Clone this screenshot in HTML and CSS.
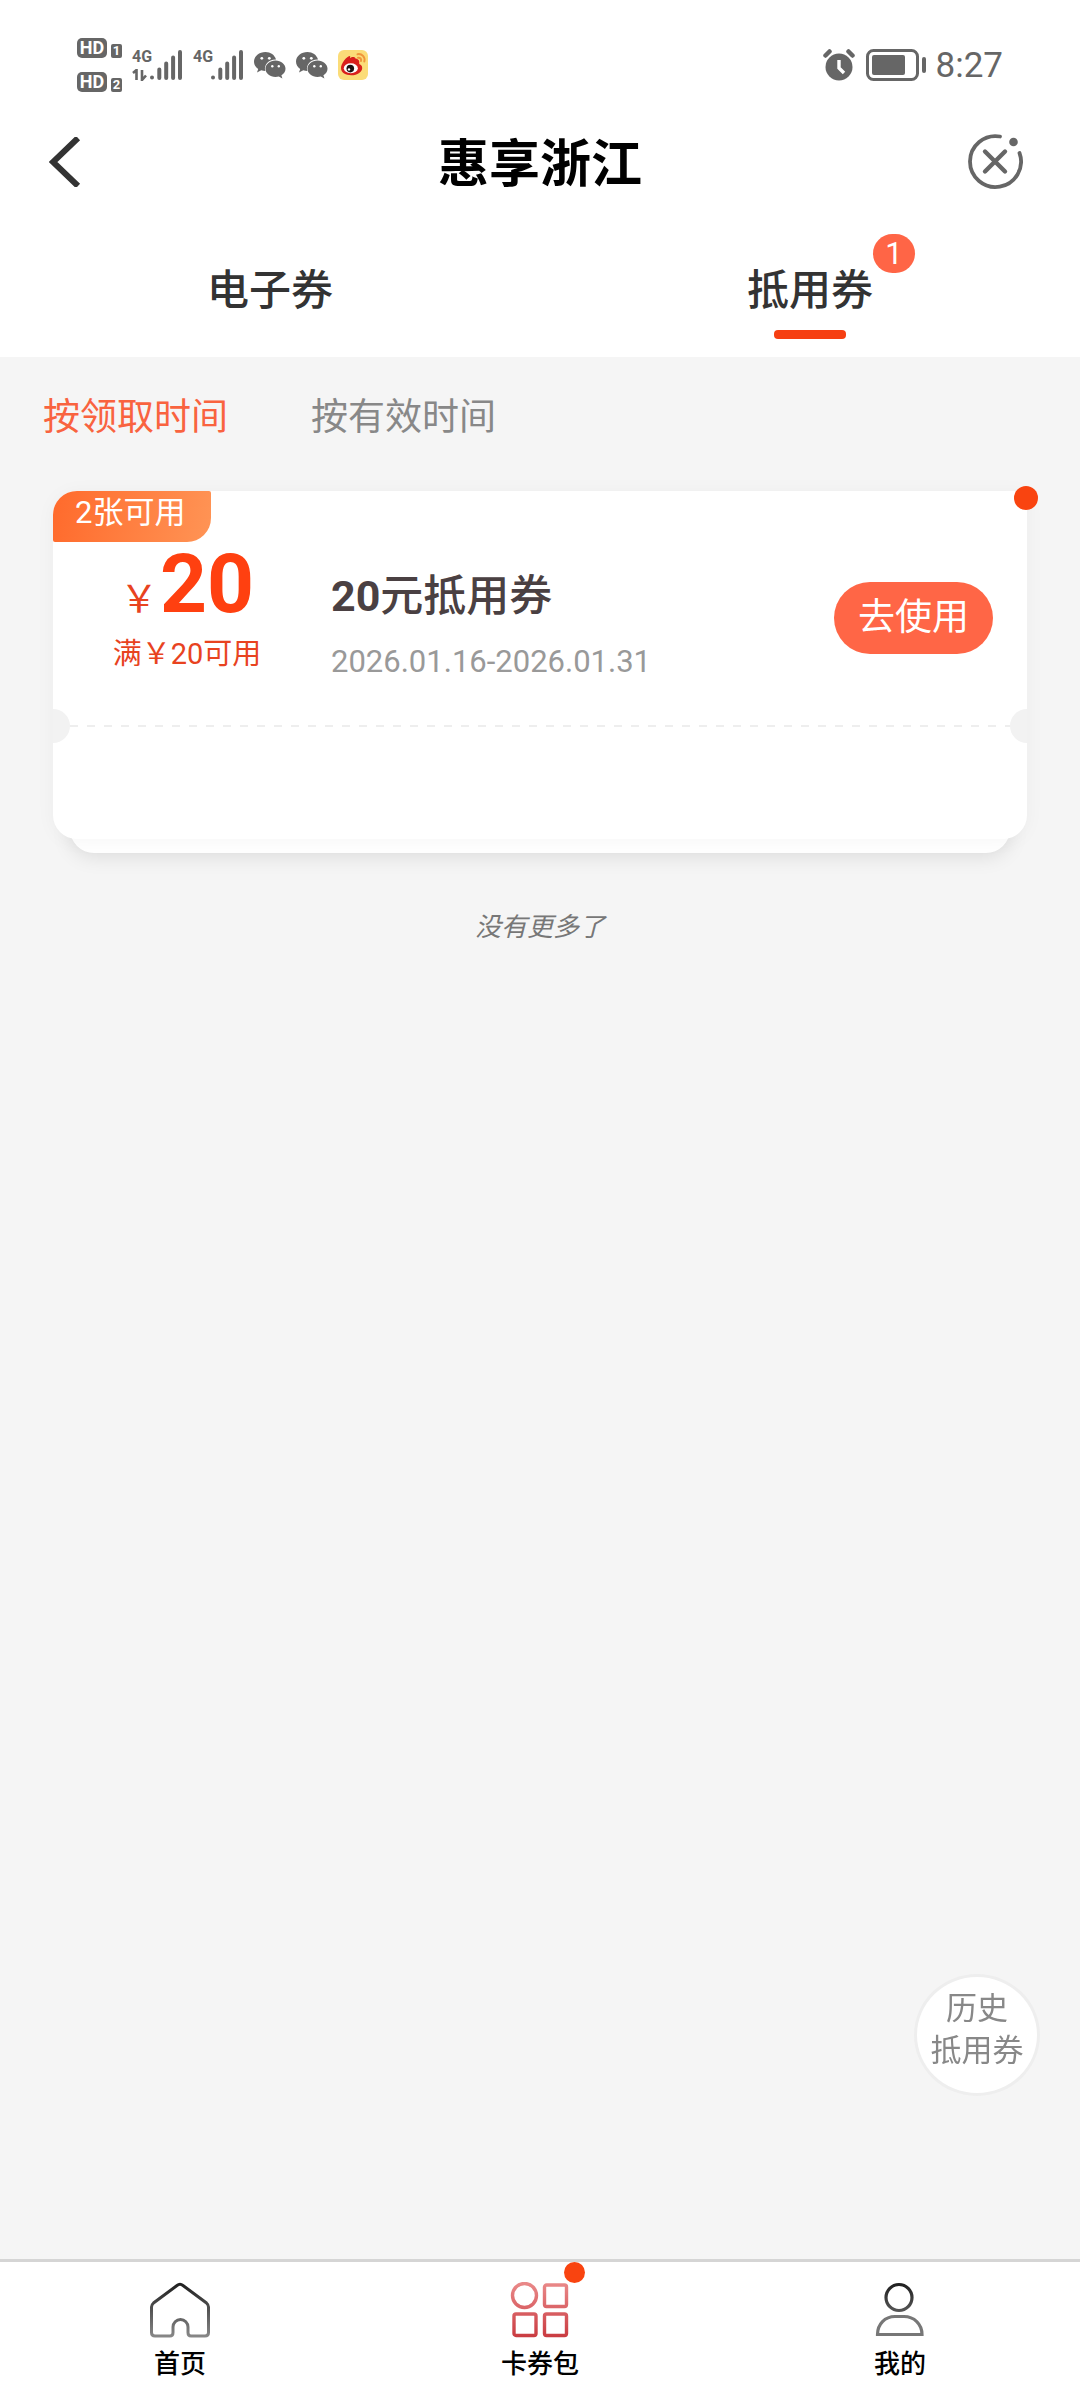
FILE: index.html
```html
<!DOCTYPE html>
<html lang="zh-CN">
<head>
<meta charset="utf-8">
<meta name="viewport" content="width=device-width, initial-scale=1">
<title>惠享浙江</title>
<link rel="stylesheet" href="styles.css">
</head>
<body>
<svg class="defs" width="0" height="0" aria-hidden="true">
  <defs>
    <linearGradient id="dark" gradientUnits="userSpaceOnUse" x1="0" y1="0" x2="0" y2="56"><stop offset="0" stop-color="#1c1c1c"/><stop offset="1" stop-color="#8a8a8a"/></linearGradient>
    <linearGradient id="red" gradientUnits="userSpaceOnUse" x1="0" y1="0" x2="0" y2="56"><stop offset="0" stop-color="#ea8a8a"/><stop offset="1" stop-color="#c93a40"/></linearGradient>
    <symbol id="bars" viewBox="0 0 34 32">
      <path d="M3 28.500v0M10.300 20.500v8.500M17.200 14.500v14.500M24.100 8.500v20.500M31 3v26" fill="none" stroke="#666" stroke-width="4" stroke-linecap="round"/>
    </symbol>
    <symbol id="wechat" viewBox="0 0 32 28">
      <path d="M11.500 1C5.200 1 0 5.200 0 10.600c0 3 1.600 5.600 4.200 7.400L3 21.500l4.300-2.200c1.200.4 2.700.6 4 .6-1.800-6.200 3.500-11.800 10.700-11.500C20.700 4 16.500 1 11.500 1z" fill="#666"/>
      <path d="M21.500 9.600c-5.600 0-10 3.700-10 8.200s4.400 8.200 10 8.200c1.100 0 2.200-.2 3.300-.5l3.600 1.900-1-3.100c2.500-1.600 4.100-3.900 4.100-6.500 0-4.500-4.400-8.200-10-8.200z" fill="#666"/>
      <g fill="#fff"><circle cx="7.800" cy="7.300" r="1.400"/><circle cx="15.300" cy="7.300" r="1.400"/><circle cx="18.300" cy="15.200" r="1.200"/><circle cx="24.800" cy="15.200" r="1.200"/></g>
    </symbol>
  </defs>
</svg>

<header class="top">
  <div class="status">
    <div class="status-side">
      <div class="sims">
        <div class="sim"><span class="hd">HD</span><span class="slot">1</span></div>
        <div class="sim"><span class="hd">HD</span><span class="slot">2</span></div>
      </div>
      <div class="signal">
        <div class="net"><span>4G</span>
          <svg width="16" height="12" viewBox="0 0 16 12"><path d="M1 4l3.500-3v10M10 1v10l4-4.500" fill="none" stroke="#666" stroke-width="2.600"/></svg>
        </div>
        <svg class="bars" width="34" height="32"><use href="#bars"/></svg>
      </div>
      <div class="signal second">
        <div class="net"><span>4G</span></div>
        <svg class="bars" width="34" height="32"><use href="#bars"/></svg>
      </div>
      <svg class="app" width="32" height="28"><use href="#wechat"/></svg>
      <svg class="app" width="32" height="28"><use href="#wechat"/></svg>
      <svg class="app" width="30" height="30" viewBox="0 0 30 30">
        <rect width="30" height="30" rx="6" fill="#fbdc78"/>
        <path d="M17.500 8.500c-1-2.500-4-1.500-5.500-.6l.2-1.900c-3.400 0-9.200 7.500-9.200 12 0 4.800 5 7.200 10.200 7.200 6.500 0 11-3.500 11-7.300 0-2.600-1.800-3.600-3-4 .4-2.900-.2-4.900-3.700-5.400z" fill="#d9201c"/>
        <ellipse cx="12.800" cy="18.300" rx="7" ry="5" fill="#fff"/>
        <circle cx="12.300" cy="18.600" r="3.800" fill="#1b1414"/><circle cx="11" cy="19.400" r="1.200" fill="#fff"/>
        <path d="M19.500 4.200c4.500-.8 8 3 6.800 7.300M20 7.800c2.200-.4 3.600 1.200 3 3.200" fill="none" stroke="#f0953a" stroke-width="2" stroke-linecap="round"/>
      </svg>
    </div>
    <div class="status-side clock">
      <svg width="34" height="32" viewBox="0 0 34 32">
        <circle cx="17" cy="18" r="13.500" fill="#666"/>
        <path d="M3.500 6.500l4-4M30.500 6.500l-4-4" stroke="#666" stroke-width="4.500" stroke-linecap="round"/>
        <path d="M17 11v8l5 5" fill="none" stroke="#fff" stroke-width="3.400"/>
      </svg>
      <svg class="battery" width="60" height="32" viewBox="0 0 60 32">
        <rect x="1.500" y="1.500" width="50" height="29" rx="6" fill="none" stroke="#666" stroke-width="3"/>
        <rect x="6" y="6" width="33" height="20" rx="2" fill="#666"/>
        <path d="M58 10v12" stroke="#666" stroke-width="4" stroke-linecap="round"/>
      </svg>
      <time>8:27</time>
    </div>
  </div>

  <div class="titlebar">
    <button class="icon-btn" aria-label="返回">
      <svg width="32" height="50" viewBox="0 0 32 50"><path d="M29 1L4 25l25 24" fill="none" stroke="#333" stroke-width="6"/></svg>
    </button>
    <h1>惠享浙江</h1>
    <button class="icon-btn close" aria-label="关闭">
      <svg width="56" height="56" viewBox="0 0 56 56" fill="none" stroke="#666" stroke-linecap="round">
        <path d="M33 2.500A25.500 25.500 0 1 0 52.500 19" stroke-width="3.800"/>
        <path d="M18 17.500l20 20M38 17.500l-20 20" stroke-width="4.400"/>
        <circle cx="46.500" cy="8" r="4.300" fill="#666" stroke="none"/>
      </svg>
    </button>
  </div>

  <nav class="tabs">
    <a class="tab" href="#evoucher">电子券</a>
    <a class="tab active" href="#coupon"><span class="tab-label">抵用券<span class="count">1</span></span></a>
  </nav>
</header>

<main class="content">
  <div class="filters">
    <button class="filter on">按领取时间</button>
    <button class="filter">按有效时间</button>
  </div>

  <article class="coupon">
    <div class="coupon-main">
      <span class="tag">2张可用</span>
      <div class="amount">
        <div class="price"><span class="yen">￥</span><strong>20</strong></div>
        <div class="rule">满￥20可用</div>
      </div>
      <div class="info">
        <h2><strong>20</strong>元抵用券</h2>
        <p>2026.01.16-2026.01.31</p>
      </div>
      <button class="use">去使用</button>
    </div>
    <div class="tear"><svg width="100%" height="2"><line x1="0" y1="1" x2="100%" y2="1" stroke="#eee" stroke-width="2" stroke-dasharray="8 9"/></svg></div>
    <div class="coupon-foot"></div>
    <span class="dot"></span>
  </article>
  <div class="stack"></div>

  <p class="end">没有更多了</p>
</main>

<button class="history">历史<br>抵用券</button>

<nav class="bottom">
  <a href="#home">
    <svg width="60" height="56" viewBox="0 0 60 56"><path d="M27 3.500q3-2.500 6 0L56.500 21q2 1.800 2 4v25.500q0 3.500-3.500 3.500H41q-3 0-3-3.500V45a7.500 7.500 0 0 0-15 0v5.500q0 3.500-3 3.500H5q-3.500 0-3.500-3.500V25q0-2.200 2-4z" fill="none" stroke="url(#dark)" stroke-width="3"/></svg>
    <span>首页</span>
  </a>
  <a href="#cards">
    <span class="nav-icon">
      <svg width="60" height="56" viewBox="0 0 60 56" fill="none" stroke="url(#red)" stroke-width="3.400"><circle cx="14.500" cy="13.500" r="12"/><rect x="34.500" y="3" width="22" height="21.500" rx="2"/><rect x="4" y="32" width="22" height="21.500" rx="2"/><rect x="34.500" y="32" width="22" height="21.500" rx="2"/></svg>
      <i class="nav-dot"></i>
    </span>
    <span>卡券包</span>
  </a>
  <a href="#mine">
    <svg width="60" height="56" viewBox="0 0 60 56" fill="none" stroke="url(#dark)" stroke-width="3.200"><circle cx="29" cy="15.500" r="13"/><path d="M7.500 52.500C7.500 42 15 34.500 25 34.500h9c10 0 18 7.500 18 18z" stroke="#777"/></svg>
    <span>我的</span>
  </a>
</nav>
</body>
</html>
```

FILE: styles.css
```css
* { box-sizing: border-box; }

body {
  margin: 0;
  min-height: 100vh;
  display: flex;
  flex-direction: column;
  background: #f5f5f5;
  color: #333;
  font-family: Roboto, "Noto Sans CJK SC", sans-serif;
}

button {
  border: 0;
  padding: 0;
  background: none;
  font: inherit;
  color: inherit;
  cursor: pointer;
}

a { color: inherit; text-decoration: none; }
h1, h2, p { margin: 0; }
svg { display: block; }
.defs { position: absolute; }

.top { background: #fff; }

/* status bar */
.status {
  display: flex;
  justify-content: space-between;
  align-items: center;
  height: 130px;
  padding: 0 77px;
  color: #666;
}
.status-side { display: flex; align-items: center; gap: 10px; }
.sims { display: flex; flex-direction: column; gap: 14px; }
.sim { display: flex; align-items: flex-end; gap: 4px; }
.hd {
  width: 30px;
  border-radius: 5px;
  background: #666;
  color: #fff;
  font-size: 18px;
  font-weight: 700;
  line-height: 20px;
  text-align: center;
}
.slot {
  width: 11px;
  border-radius: 2px;
  background: #666;
  color: #fff;
  font-size: 13px;
  font-weight: 700;
  line-height: 14px;
  text-align: center;
}
.signal { display: flex; align-items: stretch; height: 32px; }
.net {
  display: flex;
  flex-direction: column;
  justify-content: space-between;
  width: 17px;
  font-size: 16px;
  font-weight: 700;
  line-height: 16px;
}
.app { flex: none; }
.clock time { padding-top: 2px; font-size: 35px; line-height: 40px; }

/* title bar */
.titlebar {
  display: grid;
  grid-template-columns: 1fr auto 1fr;
  align-items: center;
  height: 64px;
  padding: 0 49px;
}
.titlebar h1 {
  padding-top: 6px;
  color: #000;
  font-size: 51px;
  font-weight: 700;
  line-height: 58px;
}
.close { justify-self: end; padding-right: 8px; }

/* tabs */
.tabs { display: grid; grid-template-columns: 1fr 1fr; height: 163px; padding-top: 70px; }
.tab {
  display: flex;
  flex-direction: column;
  align-items: center;
  gap: 12px;
  font-size: 42px;
  font-weight: 500;
  line-height: 54px;
}
.tab.active::after {
  content: "";
  width: 72px;
  height: 9px;
  border-radius: 4px;
  background: #f63f12;
}
.tab-label { position: relative; }
.count {
  position: absolute;
  left: 100%;
  top: -30px;
  width: 42px;
  border-radius: 20px;
  background: #ff6546;
  color: #fff;
  font-size: 31px;
  font-weight: 400;
  line-height: 39px;
  text-align: center;
}

/* list */
.content { flex: 1; padding: 0 53px; }
.filters { display: flex; gap: 83px; margin: 0 -10px; padding: 37px 0 49px; }
.filter { color: #888; font-size: 37px; line-height: 48px; }
.filter.on { color: #f9633f; }

.coupon {
  position: relative;
  z-index: 1;
  border-radius: 24px 4px 24px 24px;
  background: #fff;
  box-shadow: 0 2px 20px rgba(0, 0, 0, .04);
}
.coupon-main {
  position: relative;
  display: flex;
  align-items: center;
  height: 218px;
  padding: 36px 34px 0 0;
}
.tag {
  position: absolute;
  left: 0;
  top: 0;
  width: 158px;
  height: 51px;
  padding-left: 22px;
  border-radius: 24px 2px 24px 2px;
  background: linear-gradient(100deg, #ff6a2c, #ff9455);
  color: #fff;
  font-size: 31px;
  line-height: 44px;
}
.amount { width: 268px; padding-bottom: 12px; color: #e8431f; text-align: center; }
.price { display: flex; justify-content: center; align-items: baseline; gap: 2px; height: 66px; line-height: 66px; }
.yen { font-size: 38px; }
.price strong { color: #ff4010; font-size: 82px; font-weight: 700; }
.rule { margin-top: 17px; font-size: 29px; line-height: 40px; }
.info { flex: 1; padding: 14px 0 0 10px; }
.info h2 { color: #4a4042; font-size: 43px; font-weight: 500; line-height: 56px; }
.info h2 strong { font-weight: 700; }
.info p { margin-top: 18px; color: #999; font-size: 31px; line-height: 40px; }
.use {
  width: 159px;
  height: 72px;
  padding-bottom: 8px;
  border-radius: 36px;
  background: #ff6646;
  color: #fff;
  font-size: 37px;
}
.tear { display: flex; align-items: center; justify-content: space-between; height: 34px; }
.tear::before, .tear::after {
  content: "";
  flex: none;
  width: 17px;
  height: 34px;
  border-radius: 0 17px 17px 0;
  background: #f2f2f2;
}
.tear::after { border-radius: 17px 0 0 17px; }
.coupon-foot { height: 96px; }
.dot {
  position: absolute;
  right: -11px;
  top: -5px;
  width: 24px;
  height: 24px;
  border-radius: 50%;
  background: #f94410;
}
.stack {
  height: 34px;
  margin: -20px 17px 0;
  border-radius: 0 0 24px 24px;
  background: #fff;
  box-shadow: 0 4px 20px rgba(0, 0, 0, .1);
}
.end {
  margin-top: 54px;
  color: #777;
  font-size: 26px;
  font-style: italic;
  line-height: 40px;
  text-align: center;
}

.history {
  position: fixed;
  right: 40px;
  bottom: 292px;
  width: 126px;
  height: 122px;
  padding-bottom: 10px;
  border: 3px solid #eee;
  border-radius: 50%;
  background: #fff;
  color: #888;
  font-size: 31px;
  line-height: 42px;
}

/* bottom navigation */
.bottom {
  display: grid;
  grid-template-columns: repeat(3, 1fr);
  height: 129px;
  border-top: 3px solid #d5d5d5;
  background: #fff;
  color: #000;
}
.bottom a {
  display: flex;
  flex-direction: column;
  align-items: center;
  gap: 8px;
  padding-top: 20px;
  font-size: 26px;
  font-weight: 500;
  line-height: 36px;
}
.nav-icon { position: relative; }
.nav-dot {
  position: absolute;
  right: -15px;
  top: -20px;
  width: 21px;
  height: 21px;
  border-radius: 50%;
  background: #f94410;
}
```
